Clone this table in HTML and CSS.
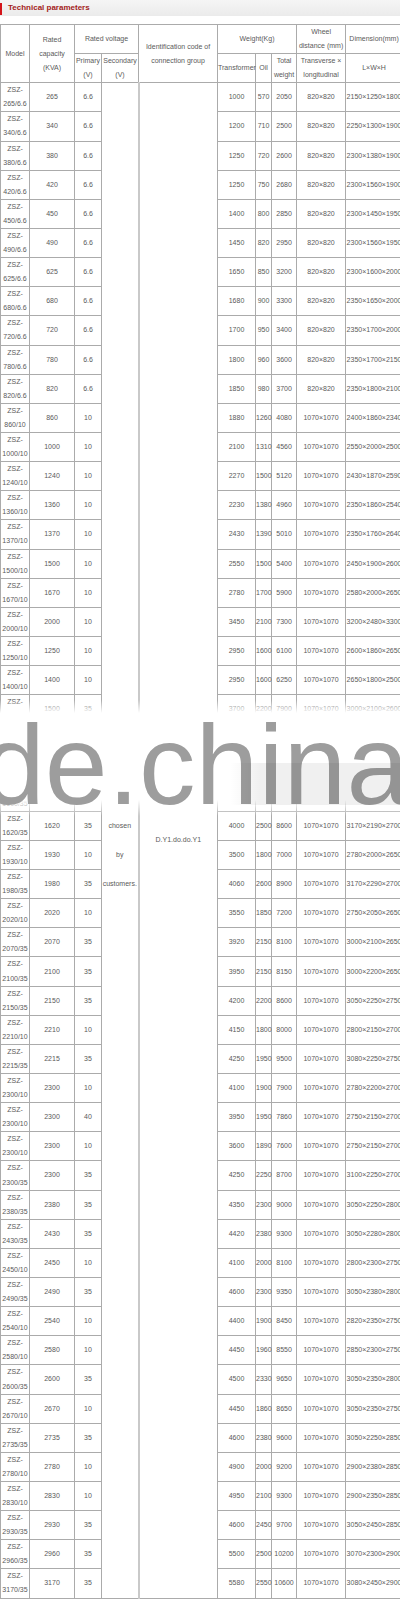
FILE: index.html
```
<!DOCTYPE html>
<html>
<head>
<meta charset="utf-8">
<link rel="stylesheet" href="styles.css">
</head>
<body>
<div class="page">
  <div class="titlebar"><span class="mark"></span><span class="title">Technical parameters</span></div>
  <table class="params">
    <colgroup>
      <col class="w-model"><col class="w-cap"><col class="w-prim"><col class="w-sec"><col class="w-ident"><col class="w-trans"><col class="w-oil"><col class="w-total"><col class="w-wheel"><col class="w-dim">
    </colgroup>
    <thead>
      <tr>
        <th rowspan="2">Model</th>
        <th rowspan="2">Rated<br>capacity<br>(KVA)</th>
        <th colspan="2">Rated voltage</th>
        <th rowspan="2">Identification code of<br>connection group</th>
        <th colspan="3">Weight(Kg)</th>
        <th>Wheel<br>distance (mm)</th>
        <th>Dimension(mm)</th>
      </tr>
      <tr>
        <th>Primary<br>(V)</th>
        <th>Secondary<br>(V)</th>
        <th>Transformer</th>
        <th>Oil</th>
        <th>Total<br>weight</th>
        <th>Transverse ×<br>longitudinal</th>
        <th>L×W×H</th>
      </tr>
    </thead>
    <tbody>
      <tr><td>ZSZ-265/6.6</td><td>265</td><td>6.6</td><td rowspan="52" class="sec">Can be<br>chosen<br>by<br>customers.</td><td rowspan="52" class="ident">D.Y1.do.do.Y1</td><td>1000</td><td>570</td><td>2050</td><td>820×820</td><td>2150×1250×1800</td></tr>
      <tr><td>ZSZ-340/6.6</td><td>340</td><td>6.6</td><td>1200</td><td>710</td><td>2500</td><td>820×820</td><td>2250×1300×1900</td></tr>
      <tr><td>ZSZ-380/6.6</td><td>380</td><td>6.6</td><td>1250</td><td>720</td><td>2600</td><td>820×820</td><td>2300×1380×1900</td></tr>
      <tr><td>ZSZ-420/6.6</td><td>420</td><td>6.6</td><td>1250</td><td>750</td><td>2680</td><td>820×820</td><td>2300×1560×1900</td></tr>
      <tr><td>ZSZ-450/6.6</td><td>450</td><td>6.6</td><td>1400</td><td>800</td><td>2850</td><td>820×820</td><td>2300×1450×1950</td></tr>
      <tr><td>ZSZ-490/6.6</td><td>490</td><td>6.6</td><td>1450</td><td>820</td><td>2950</td><td>820×820</td><td>2300×1560×1950</td></tr>
      <tr><td>ZSZ-625/6.6</td><td>625</td><td>6.6</td><td>1650</td><td>850</td><td>3200</td><td>820×820</td><td>2300×1600×2000</td></tr>
      <tr><td>ZSZ-680/6.6</td><td>680</td><td>6.6</td><td>1680</td><td>900</td><td>3300</td><td>820×820</td><td>2350×1650×2000</td></tr>
      <tr><td>ZSZ-720/6.6</td><td>720</td><td>6.6</td><td>1700</td><td>950</td><td>3400</td><td>820×820</td><td>2350×1700×2000</td></tr>
      <tr><td>ZSZ-780/6.6</td><td>780</td><td>6.6</td><td>1800</td><td>960</td><td>3600</td><td>820×820</td><td>2350×1700×2150</td></tr>
      <tr><td>ZSZ-820/6.6</td><td>820</td><td>6.6</td><td>1850</td><td>980</td><td>3700</td><td>820×820</td><td>2350×1800×2100</td></tr>
      <tr><td>ZSZ-860/10</td><td>860</td><td>10</td><td>1880</td><td>1260</td><td>4080</td><td>1070×1070</td><td>2400×1860×2340</td></tr>
      <tr><td>ZSZ-1000/10</td><td>1000</td><td>10</td><td>2100</td><td>1310</td><td>4560</td><td>1070×1070</td><td>2550×2000×2500</td></tr>
      <tr><td>ZSZ-1240/10</td><td>1240</td><td>10</td><td>2270</td><td>1500</td><td>5120</td><td>1070×1070</td><td>2430×1870×2590</td></tr>
      <tr><td>ZSZ-1360/10</td><td>1360</td><td>10</td><td>2230</td><td>1380</td><td>4960</td><td>1070×1070</td><td>2350×1860×2540</td></tr>
      <tr><td>ZSZ-1370/10</td><td>1370</td><td>10</td><td>2430</td><td>1390</td><td>5010</td><td>1070×1070</td><td>2350×1760×2640</td></tr>
      <tr><td>ZSZ-1500/10</td><td>1500</td><td>10</td><td>2550</td><td>1500</td><td>5400</td><td>1070×1070</td><td>2450×1900×2600</td></tr>
      <tr><td>ZSZ-1670/10</td><td>1670</td><td>10</td><td>2780</td><td>1700</td><td>5900</td><td>1070×1070</td><td>2580×2000×2650</td></tr>
      <tr><td>ZSZ-2000/10</td><td>2000</td><td>10</td><td>3450</td><td>2100</td><td>7300</td><td>1070×1070</td><td>3200×2480×3300</td></tr>
      <tr><td>ZSZ-1250/10</td><td>1250</td><td>10</td><td>2950</td><td>1600</td><td>6100</td><td>1070×1070</td><td>2600×1860×2650</td></tr>
      <tr><td>ZSZ-1400/10</td><td>1400</td><td>10</td><td>2950</td><td>1600</td><td>6250</td><td>1070×1070</td><td>2650×1800×2500</td></tr>
      <tr><td>ZSZ-1500/35</td><td>1500</td><td>35</td><td>3700</td><td>2200</td><td>7900</td><td>1070×1070</td><td>3000×2100×2600</td></tr>
      <tr><td>ZSZ-1540/35</td><td>1540</td><td>35</td><td>3800</td><td>2300</td><td>8100</td><td>1070×1070</td><td>3050×2150×2650</td></tr>
      <tr><td>ZSZ-1580/35</td><td>1580</td><td>35</td><td>3900</td><td>2400</td><td>8300</td><td>1070×1070</td><td>3100×2150×2650</td></tr>
      <tr><td>ZSZ-1600/35</td><td>1600</td><td>35</td><td>3950</td><td>2450</td><td>8450</td><td>1070×1070</td><td>3150×2180×2700</td></tr>
      <tr><td>ZSZ-1620/35</td><td>1620</td><td>35</td><td>4000</td><td>2500</td><td>8600</td><td>1070×1070</td><td>3170×2190×2700</td></tr>
      <tr><td>ZSZ-1930/10</td><td>1930</td><td>10</td><td>3500</td><td>1800</td><td>7000</td><td>1070×1070</td><td>2780×2000×2650</td></tr>
      <tr><td>ZSZ-1980/35</td><td>1980</td><td>35</td><td>4060</td><td>2600</td><td>8900</td><td>1070×1070</td><td>3170×2290×2700</td></tr>
      <tr><td>ZSZ-2020/10</td><td>2020</td><td>10</td><td>3550</td><td>1850</td><td>7200</td><td>1070×1070</td><td>2750×2050×2650</td></tr>
      <tr><td>ZSZ-2070/35</td><td>2070</td><td>35</td><td>3920</td><td>2150</td><td>8100</td><td>1070×1070</td><td>3000×2100×2650</td></tr>
      <tr><td>ZSZ-2100/35</td><td>2100</td><td>35</td><td>3950</td><td>2150</td><td>8150</td><td>1070×1070</td><td>3000×2200×2650</td></tr>
      <tr><td>ZSZ-2150/35</td><td>2150</td><td>35</td><td>4200</td><td>2200</td><td>8600</td><td>1070×1070</td><td>3050×2250×2750</td></tr>
      <tr><td>ZSZ-2210/10</td><td>2210</td><td>10</td><td>4150</td><td>1800</td><td>8000</td><td>1070×1070</td><td>2800×2150×2700</td></tr>
      <tr><td>ZSZ-2215/35</td><td>2215</td><td>35</td><td>4250</td><td>1950</td><td>9500</td><td>1070×1070</td><td>3080×2250×2750</td></tr>
      <tr><td>ZSZ-2300/10</td><td>2300</td><td>10</td><td>4100</td><td>1900</td><td>7900</td><td>1070×1070</td><td>2780×2200×2700</td></tr>
      <tr><td>ZSZ-2300/10</td><td>2300</td><td>40</td><td>3950</td><td>1950</td><td>7860</td><td>1070×1070</td><td>2750×2150×2700</td></tr>
      <tr><td>ZSZ-2300/10</td><td>2300</td><td>10</td><td>3600</td><td>1890</td><td>7600</td><td>1070×1070</td><td>2750×2150×2700</td></tr>
      <tr><td>ZSZ-2300/35</td><td>2300</td><td>35</td><td>4250</td><td>2250</td><td>8700</td><td>1070×1070</td><td>3100×2250×2700</td></tr>
      <tr><td>ZSZ-2380/35</td><td>2380</td><td>35</td><td>4350</td><td>2300</td><td>9000</td><td>1070×1070</td><td>3050×2250×2800</td></tr>
      <tr><td>ZSZ-2430/35</td><td>2430</td><td>35</td><td>4420</td><td>2380</td><td>9300</td><td>1070×1070</td><td>3050×2280×2800</td></tr>
      <tr><td>ZSZ-2450/10</td><td>2450</td><td>10</td><td>4100</td><td>2000</td><td>8100</td><td>1070×1070</td><td>2800×2300×2750</td></tr>
      <tr><td>ZSZ-2490/35</td><td>2490</td><td>35</td><td>4600</td><td>2300</td><td>9350</td><td>1070×1070</td><td>3050×2380×2800</td></tr>
      <tr><td>ZSZ-2540/10</td><td>2540</td><td>10</td><td>4400</td><td>1900</td><td>8450</td><td>1070×1070</td><td>2820×2350×2750</td></tr>
      <tr><td>ZSZ-2580/10</td><td>2580</td><td>10</td><td>4450</td><td>1960</td><td>8550</td><td>1070×1070</td><td>2850×2300×2750</td></tr>
      <tr><td>ZSZ-2600/35</td><td>2600</td><td>35</td><td>4500</td><td>2330</td><td>9650</td><td>1070×1070</td><td>3050×2350×2800</td></tr>
      <tr><td>ZSZ-2670/10</td><td>2670</td><td>10</td><td>4450</td><td>1860</td><td>8650</td><td>1070×1070</td><td>3050×2350×2750</td></tr>
      <tr><td>ZSZ-2735/35</td><td>2735</td><td>35</td><td>4600</td><td>2380</td><td>9600</td><td>1070×1070</td><td>3050×2250×2850</td></tr>
      <tr><td>ZSZ-2780/10</td><td>2780</td><td>10</td><td>4900</td><td>2000</td><td>9200</td><td>1070×1070</td><td>2900×2380×2850</td></tr>
      <tr><td>ZSZ-2830/10</td><td>2830</td><td>10</td><td>4950</td><td>2100</td><td>9300</td><td>1070×1070</td><td>2900×2350×2850</td></tr>
      <tr><td>ZSZ-2930/35</td><td>2930</td><td>35</td><td>4600</td><td>2450</td><td>9700</td><td>1070×1070</td><td>3050×2450×2850</td></tr>
      <tr><td>ZSZ-2960/35</td><td>2960</td><td>35</td><td>5500</td><td>2500</td><td>10200</td><td>1070×1070</td><td>3070×2300×2900</td></tr>
      <tr><td>ZSZ-3170/35</td><td>3170</td><td>35</td><td>5580</td><td>2550</td><td>10600</td><td>1070×1070</td><td>3080×2450×2900</td></tr>
    </tbody>
  </table>
  <div class="watermark"><span class="wm-text">de.china</span><span class="wm-band"></span></div>
</div>
</body>
</html>
```

FILE: styles.css
```
html, body {
  margin: 0;
  padding: 0;
  background: #fff;
}
body {
  font-family: "Liberation Sans", Arial, sans-serif;
  overflow-x: hidden;
}
.page {
  position: relative;
  width: 400px;
  overflow: hidden;
}
.titlebar {
  height: 16px;
  background: linear-gradient(#f5f5f5, #ebebeb);
  display: flex;
  align-items: center;
  margin-bottom: 8px;
}
.mark {
  align-self: flex-end;
  width: 2px;
  height: 12px;
  margin-bottom: 1px;
  background: #d4141a;
}
.title {
  margin-left: 6px;
  font-size: 8px;
  font-weight: bold;
  color: #a31c20;
  line-height: 16px;
}
.params {
  border-collapse: collapse;
  table-layout: fixed;
  width: 402px;
  font-size: 7px;
  line-height: 14.0625px;
  color: #5a5a5a;
  text-align: center;
}
.params thead tr {
  height: 29px;
}
.params tbody tr {
  height: 29.15px;
}
.params th,
.params td {
  border: 1px solid #ababab;
  padding: 0;
  font-weight: normal;
  vertical-align: middle;
}
.w-model { width: 29px; }
.w-cap { width: 45px; }
.w-prim { width: 27px; }
.w-sec { width: 37px; }
.w-ident { width: 79px; }
.w-trans { width: 38px; }
.w-oil { width: 16px; }
.w-total { width: 25px; }
.w-wheel { width: 49px; }
.w-dim { width: 57px; }
.params td.sec {
  line-height: 29px;
}
.params td.ident {
  border-left: 2px solid #c9c9c9;
}
.watermark {
  position: absolute;
  left: 0;
  top: 700px;
  width: 400px;
  height: 116px;
  overflow: hidden;
  background: linear-gradient(to bottom, rgba(255,255,255,0) 0px, #fff 13px, #fff 100px, rgba(255,255,255,0) 116px);
}
.wm-text {
  position: absolute;
  left: -18px;
  top: 9px;
  font-family: "Liberation Sans", Arial, sans-serif;
  font-size: 113px;
  line-height: 113px;
  color: #9d9d9d;
  white-space: nowrap;
}
.wm-band {
  position: absolute;
  left: 230px;
  top: 63px;
  width: 170px;
  height: 42px;
  background: linear-gradient(to right, rgba(0,0,0,0), rgba(0,0,0,0.06) 30px);
}
```
